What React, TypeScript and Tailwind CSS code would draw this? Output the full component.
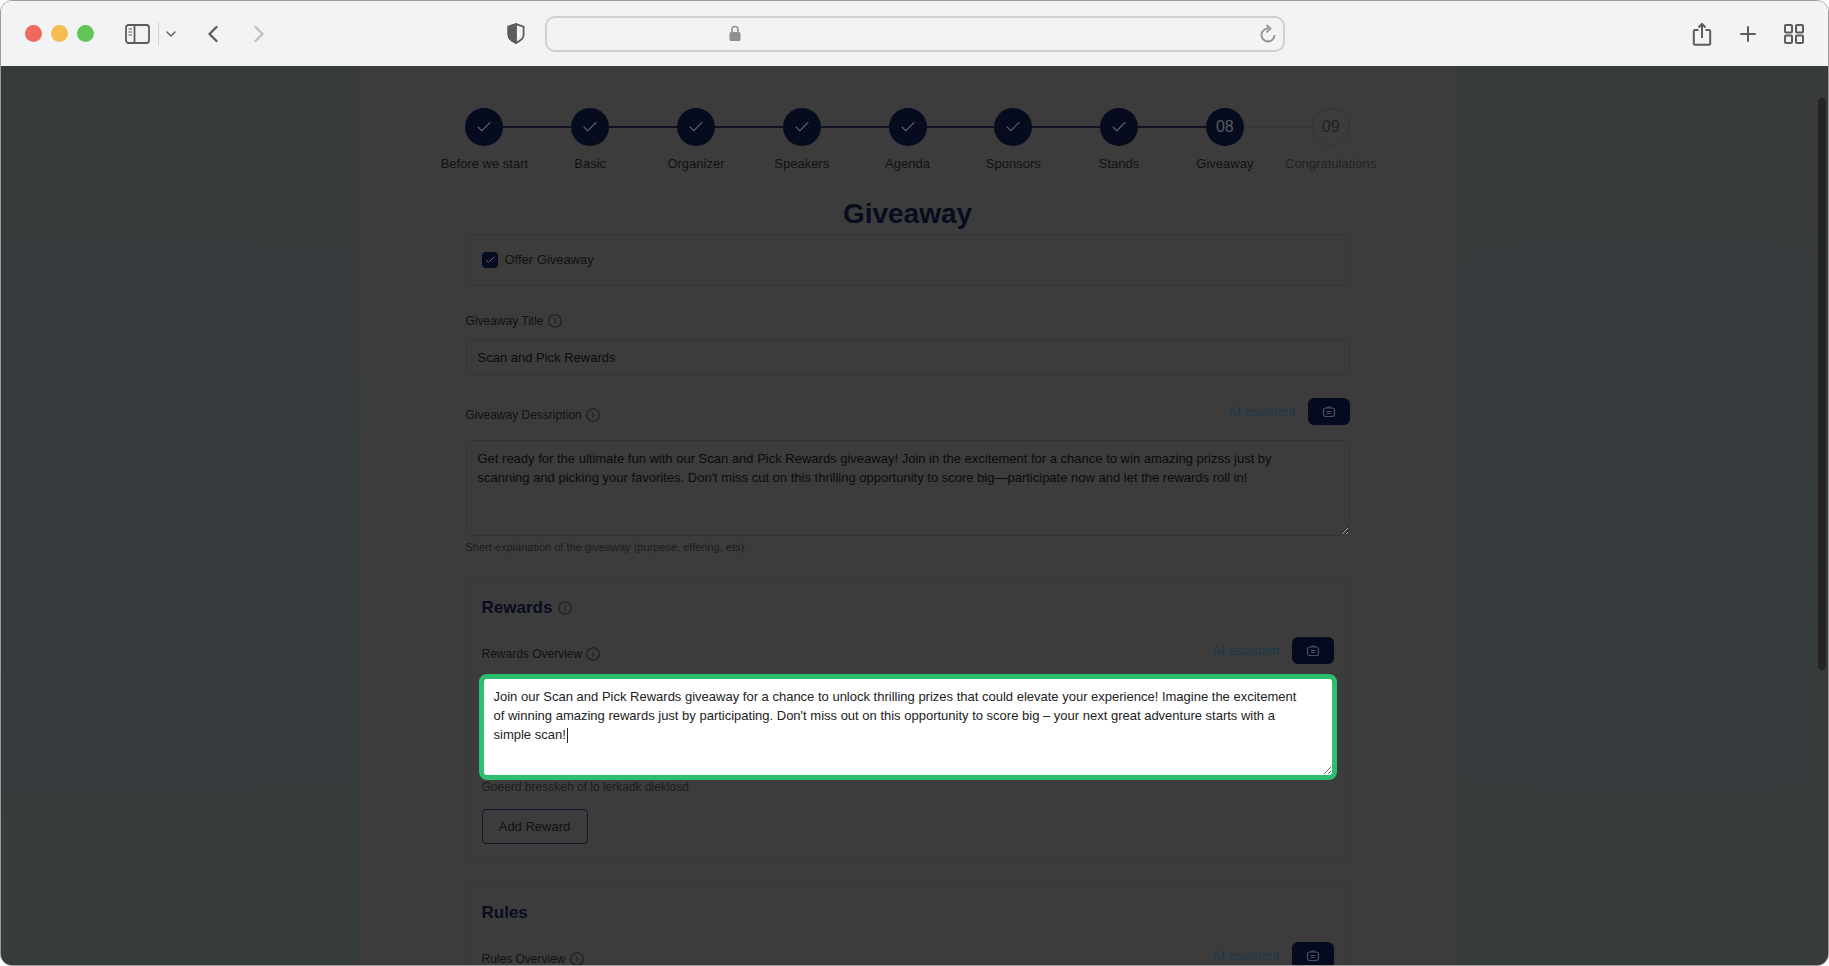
import { Check, ChevronDown, ChevronLeft, ChevronRight, Plus } from 'lucide-react';
import type { ReactNode } from 'react';

interface Step {
  label: string;
  status: 'done' | 'current' | 'upcoming';
}

const steps: Step[] = [
  { label: 'Before we start', status: 'done' },
  { label: 'Basic', status: 'done' },
  { label: 'Organizer', status: 'done' },
  { label: 'Speakers', status: 'done' },
  { label: 'Agenda', status: 'done' },
  { label: 'Sponsors', status: 'done' },
  { label: 'Stands', status: 'done' },
  { label: 'Giveaway', status: 'current' },
  { label: 'Congratulations', status: 'upcoming' },
];

const description = `Get ready for the ultimate fun with our Scan and Pick Rewards giveaway! Join in the excitement for a chance to win amazing prizss just by
scanning and picking your favorites. Don't miss cut on this thrilling opportunity to score big—participate now and let the rewards roll in!`;

const overview = `Join our Scan and Pick Rewards giveaway for a chance to unlock thrilling prizes that could elevate your experience! Imagine the excitement
of winning amazing rewards just by participating. Don't miss out on this opportunity to score big – your next great adventure starts with a
simple scan!`;

function InfoIcon() {
  return (
    <svg viewBox="0 0 14 14" className="w-[14px] h-[14px] flex-shrink-0" fill="none" stroke="#1a1c1c" strokeWidth="1.1">
      <circle cx="7" cy="7" r="6.3" />
      <path d="M7 4v.9M6.4 6.3H7v3.2" />
    </svg>
  );
}

function BotIcon() {
  return (
    <svg viewBox="0 0 14 14" className="w-[14px] h-[14px]" fill="none" stroke="#4b4f66" strokeWidth="1.2" strokeLinejoin="round">
      <rect x="1.5" y="3" width="11" height="8.5" rx="2.5" />
      <path d="M5 3c0-1.4 4-1.4 4 0M4.5 6.5h5M5 8.5h4" />
    </svg>
  );
}

function AssistantButton({ label, id }: { label: string; id: string }) {
  return (
    <div className="flex items-center gap-3">
      <label htmlFor={id} className="text-[13px] leading-4 text-[#1a384c]">{label}</label>
      <button id={id} className="w-[42px] h-[27px] rounded-md bg-[#060a1e] flex items-center justify-center">
        <BotIcon />
      </button>
    </div>
  );
}

function FieldLabel({ htmlFor, children }: { htmlFor: string; children: ReactNode }) {
  return (
    <div className="flex items-center gap-1 h-4">
      <label htmlFor={htmlFor} className="text-xs leading-4 text-[#101212]">{children}</label>
      <InfoIcon />
    </div>
  );
}

function Toolbar() {
  return (
    <header className="flex items-center h-[65px] flex-shrink-0 bg-[#f1f3f5] text-[#5c5c5c]">
      <div className="flex-1 flex items-center pl-6 pr-5">
        <div className="flex gap-[9px]">
          <span className="w-[17px] h-[17px] rounded-full bg-[#ee6a5f]" />
          <span className="w-[17px] h-[17px] rounded-full bg-[#f5bd4f]" />
          <span className="w-[17px] h-[17px] rounded-full bg-[#61c454]" />
        </div>
        <button aria-label="Sidebar" className="ml-[31px]">
          <svg viewBox="0 0 25 20" className="w-[25px] h-5" fill="none" stroke="currentColor" strokeWidth="1.8">
            <rect x="1" y="1" width="23" height="18" rx="2.5" />
            <path d="M9.5 1v18" />
            <path d="M3.5 5h3.5M3.5 8h3.5M3.5 11h3.5" strokeWidth="1.1" />
          </svg>
        </button>
        <span className="w-px h-6 ml-2 bg-[#d3d4d6]" />
        <button aria-label="Tab groups" className="ml-1">
          <ChevronDown className="w-4 h-4" />
        </button>
        <button aria-label="Back" className="ml-5">
          <ChevronLeft className="w-7 h-[30px]" />
        </button>
        <button aria-label="Forward" className="ml-[18px] text-[#bfc0c2]">
          <ChevronRight className="w-7 h-[30px]" />
        </button>
        <button aria-label="Privacy report" className="ml-auto">
          <svg viewBox="0 0 18 21" className="w-[18px] h-[21px]" fill="none" stroke="currentColor" strokeWidth="1.8">
            <path d="M9 1.2 16.6 3.6v8.2c0 3.6-3.6 6.3-7.6 8-4-1.7-7.6-4.4-7.6-8V3.6z" strokeLinejoin="round" />
            <path d="M9 1.2v18.6c-4-1.7-7.6-4.4-7.6-8V3.6z" fill="currentColor" />
          </svg>
        </button>
      </div>
      <div className="w-[740px] h-9 flex items-center px-[7px] border-2 border-[#cfd0d2] rounded-[10px]">
        <div className="w-[26%] flex justify-end">
          <svg viewBox="0 0 12 17" className="w-3 h-[17px]" fill="none">
            <rect x="0.5" y="7" width="11" height="9" rx="1.5" fill="#8f9090" />
            <path d="M3 7.5V4.5a3 3 0 0 1 6 0v3" stroke="#8f9090" strokeWidth="1.6" />
          </svg>
        </div>
        <button aria-label="Reload" className="ml-auto text-[#8f9090]">
          <svg viewBox="0 0 16 19" className="w-4 h-[19px]" fill="none" stroke="currentColor" strokeWidth="1.8">
            <path d="M8.5 4.5a6.5 6.5 0 1 0 6 6.5" />
            <path d="M6.5 1l4 3.6-4 3.7" />
          </svg>
        </button>
      </div>
      <div className="flex-1 flex items-center justify-end gap-6 pl-5 pr-6">
        <button aria-label="Share">
          <svg viewBox="0 0 20 24" className="w-5 h-6" fill="none" stroke="currentColor" strokeWidth="2">
            <path d="M6.5 8H3a1.2 1.2 0 0 0-1.2 1.2v12.3A1.2 1.2 0 0 0 3 22.8h14a1.2 1.2 0 0 0 1.2-1.3V9.2A1.2 1.2 0 0 0 17 8h-3.5" />
            <path d="M10 16V2M6.5 5.5 10 2l3.5 3.5" />
          </svg>
        </button>
        <button aria-label="New tab">
          <Plus className="w-6 h-6" />
        </button>
        <button aria-label="Tab overview">
          <svg viewBox="0 0 20 20" className="w-5 h-5" fill="none" stroke="currentColor" strokeWidth="2">
            <rect x="1" y="1" width="7" height="7.5" rx="1" />
            <rect x="12" y="1" width="7" height="7.5" rx="1" />
            <rect x="1" y="11.5" width="7" height="7.5" rx="1" />
            <rect x="12" y="11.5" width="7" height="7.5" rx="1" />
          </svg>
        </button>
      </div>
    </header>
  );
}

function Stepper() {
  return (
    <ol className="flex">
      {steps.map((step, i) => {
        const next = steps[i + 1];
        const upcoming = step.status === 'upcoming';
        return (
          <li key={step.label} className="flex-1 flex flex-col items-center">
            <div className="w-full flex items-center">
              <span className={`flex-1 h-[2px] ${i === 0 ? 'bg-transparent' : upcoming ? 'bg-[#363636]' : 'bg-[#121222]'}`} />
              <span
                className={`w-[38px] h-[38px] rounded-full flex items-center justify-center text-base ${
                  upcoming ? 'border border-[#343434] text-[#202121]' : 'bg-[#060b1e] text-[#5b5d62]'
                }`}
              >
                {step.status === 'done' ? <Check className="w-[18px] h-[18px]" strokeWidth={1.5} /> : `0${i + 1}`}
              </span>
              <span className={`flex-1 h-[2px] ${!next ? 'bg-transparent' : next.status === 'upcoming' ? 'bg-[#363636]' : 'bg-[#121222]'}`} />
            </div>
            <span className={`mt-[10px] text-[13px] leading-4 whitespace-nowrap ${upcoming ? 'text-[#222323]' : 'text-[#101212]'}`}>
              {step.label}
            </span>
          </li>
        );
      })}
    </ol>
  );
}

export default function App() {
  return (
    <div className="h-screen bg-white font-['Liberation_Sans',Arial,sans-serif]">
      <div className="h-full flex flex-col border border-[#9b9b9e] rounded-xl overflow-hidden">
        <Toolbar />

        <div className="flex-1 min-h-0 flex bg-[#373c3d]">
          <main className="flex-1 min-w-0 overflow-hidden bg-linear-to-b from-[#373b3b] via-[#363b3e] to-[#373c3c]">
            <div className="w-full max-w-[1100px] mx-auto pt-[42px] px-[73px] bg-[#3c3c3c] border-x border-[#373a3a]">
              <Stepper />

              <form className="px-[34px]" onSubmit={(e) => e.preventDefault()}>
                <h1 className="mt-[26px] text-[28px] leading-8 font-bold text-center text-[#080c1e]">Giveaway</h1>

                {/* Offer */}
                <div className="mt-1 h-[52px] flex items-center gap-[7px] px-[15px] border border-[#363636] rounded">
                  <span className="relative flex">
                    <input id="offer" type="checkbox" defaultChecked className="appearance-none w-4 h-4 rounded bg-[#060b1e]" />
                    <Check className="absolute inset-0 m-auto w-3 h-3 text-[#60636e] pointer-events-none" />
                  </span>
                  <label htmlFor="offer" className="text-[13px] leading-4 text-[#101212]">Offer Giveaway</label>
                </div>

                {/* Title */}
                <div className="mt-[27px]">
                  <FieldLabel htmlFor="title">Giveaway Title</FieldLabel>
                  <input
                    id="title"
                    defaultValue="Scan and Pick Rewards"
                    className="mt-[11px] w-full h-[35px] px-[11px] text-[13px] text-[#0a0b0b] border border-[#353535] rounded outline-none"
                  />
                </div>

                {/* Description */}
                <div className="mt-[23px]">
                  <div className="flex items-end justify-between">
                    <div className="pb-[2px]">
                      <FieldLabel htmlFor="description">Giveaway Dessription</FieldLabel>
                    </div>
                    <AssistantButton id="ai-description" label="AI assistent" />
                  </div>
                  <textarea
                    id="description"
                    defaultValue={description}
                    className="block mt-[15px] w-full h-24 px-[11px] py-2 text-[13px] leading-[19px] text-[#0a0b0b] border border-[#353535] rounded outline-none overflow-hidden"
                  />
                  <p className="mt-[3px] text-[11px] leading-4 text-[#1a1c1c]">Shert explanation of the giveaway (purpese, effering, ets).</p>
                </div>

                {/* Rewards */}
                <section className="mt-6 px-[15px] pt-[18px] pb-4 border border-[#363636] rounded">
                  <div className="flex items-center gap-[6px]">
                    <h2 className="text-[17px] leading-5 font-bold text-[#080c1e]">Rewards</h2>
                    <InfoIcon />
                  </div>
                  <div className="mt-[19px] flex items-end justify-between">
                    <div className="pb-[2px]">
                      <FieldLabel htmlFor="overview">Rewards Overview</FieldLabel>
                    </div>
                    <AssistantButton id="ai-overview" label="AI assistant" />
                  </div>
                  <div className="relative mt-[10px] -mx-[3px]">
                    <textarea
                      id="overview"
                      defaultValue={overview}
                      className="block w-full h-[106px] px-[10px] py-2 text-[13px] leading-[19px] text-[#222] bg-white border-[5px] border-[#2bbf6f] rounded-lg outline-none overflow-hidden"
                    />
                    {/* Text cursor */}
                    <span className="absolute left-[88px] top-[54px] w-px h-[15px] bg-[#222]" />
                  </div>
                  <p className="text-xs leading-[14px] text-[#1a1c1c]">Goeerd bresskeh of lo lerkadk dieklosd</p>
                  <button className="mt-[15px] w-[106px] h-[35px] text-[13px] text-[#101212] border border-[#15172a] rounded">Add Reward</button>
                </section>

                {/* Rules */}
                <section className="mt-[22px] px-[15px] pt-[19px] pb-4 border border-[#363636] rounded">
                  <h2 className="text-[17px] leading-5 font-bold text-[#080c1e]">Rules</h2>
                  <div className="mt-[19px] flex items-end justify-between">
                    <div className="pb-[2px]">
                      <FieldLabel htmlFor="ai-rules">Rules Overview</FieldLabel>
                    </div>
                    <AssistantButton id="ai-rules" label="AI assistent" />
                  </div>
                </section>
              </form>
            </div>
          </main>

          {/* Scrollbar */}
          <div className="w-[14px] pt-8 pr-[2px] flex justify-end bg-[#393b3b]">
            <span className="w-2 h-[572px] rounded-full bg-[#242424]" />
          </div>
        </div>
      </div>
    </div>
  );
}
